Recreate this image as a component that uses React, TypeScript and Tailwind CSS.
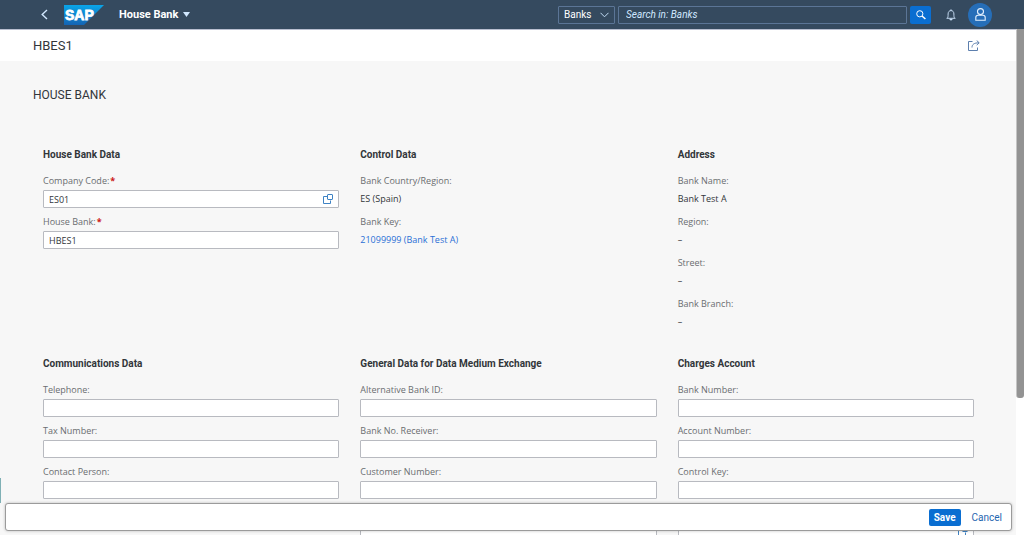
import React, { useState } from 'react';

interface Field {
  id: string;
  label: string;
  kind: 'input' | 'text' | 'link';
  value?: string;
  required?: boolean;
  valueHelp?: boolean;
}

interface FormGroup {
  title: string;
  fields: Field[];
}

const topGroups: FormGroup[] = [
  {
    title: 'House Bank Data',
    fields: [
      { id: 'companyCode', label: 'Company Code:', kind: 'input', value: 'ES01', required: true, valueHelp: true },
      { id: 'houseBank', label: 'House Bank:', kind: 'input', value: 'HBES1', required: true },
    ],
  },
  {
    title: 'Control Data',
    fields: [
      { id: 'country', label: 'Bank Country/Region:', kind: 'text', value: 'ES (Spain)' },
      { id: 'bankKey', label: 'Bank Key:', kind: 'link', value: '21099999 (Bank Test A)' },
    ],
  },
  {
    title: 'Address',
    fields: [
      { id: 'bankName', label: 'Bank Name:', kind: 'text', value: 'Bank Test A' },
      { id: 'region', label: 'Region:', kind: 'text', value: '–' },
      { id: 'street', label: 'Street:', kind: 'text', value: '–' },
      { id: 'branch', label: 'Bank Branch:', kind: 'text', value: '–' },
    ],
  },
];

const bottomGroups: FormGroup[] = [
  {
    title: 'Communications Data',
    fields: [
      { id: 'telephone', label: 'Telephone:', kind: 'input' },
      { id: 'taxNumber', label: 'Tax Number:', kind: 'input' },
      { id: 'contactPerson', label: 'Contact Person:', kind: 'input' },
    ],
  },
  {
    title: 'General Data for Data Medium Exchange',
    fields: [
      { id: 'altBankId', label: 'Alternative Bank ID:', kind: 'input' },
      { id: 'bankNoReceiver', label: 'Bank No. Receiver:', kind: 'input' },
      { id: 'customerNumber', label: 'Customer Number:', kind: 'input' },
      { id: 'dmeExtra', label: '', kind: 'input' },
    ],
  },
  {
    title: 'Charges Account',
    fields: [
      { id: 'bankNumber', label: 'Bank Number:', kind: 'input' },
      { id: 'accountNumber', label: 'Account Number:', kind: 'input' },
      { id: 'controlKey', label: 'Control Key:', kind: 'input' },
      { id: 'chargesExtra', label: '', kind: 'input', valueHelp: true },
    ],
  },
];

const SapLogo = () => (
  <svg width="40" height="20" viewBox="0 0 40 20" aria-label="SAP">
    <defs>
      <linearGradient id="sapBlue" x1="0" y1="0" x2="0" y2="1">
        <stop offset="0" stopColor="#0aa5e8" />
        <stop offset="1" stopColor="#1464b4" />
      </linearGradient>
    </defs>
    <path d="M0 0H40L20 20H0Z" fill="url(#sapBlue)" />
    <text
      x="1"
      y="15"
      fill="#fff"
      stroke="#fff"
      strokeWidth="0.8"
      fontFamily="Liberation Sans, Arial, sans-serif"
      fontWeight="700"
      fontSize="14"
    >
      SAP
    </text>
  </svg>
);

const ValueHelpIcon = () => (
  <svg width="10" height="10" viewBox="0 0 10 10" fill="none" stroke="#3f83c4">
    <path d="M4 2.5H0.5V9.5H7.5V6.5" />
    <rect x="4.5" y="0.5" width="5" height="5" rx="0.5" />
  </svg>
);

const FieldRow = ({ field }: { field: Field }) => {
  const [value, setValue] = useState(field.value ?? '');

  return (
    <div className="flex flex-col gap-[2px] font-['Open_Sans',sans-serif] text-[9px]">
      <label htmlFor={field.id} className="h-[14px] leading-[14px] text-[#6a6d70]">
        {field.label}
        {field.required && <span className="ml-px font-bold text-[#cc1919]">*</span>}
      </label>
      {field.kind === 'input' && (
        <div className="flex h-[18px] items-center rounded-[1px] border border-[#b8bac0] bg-white">
          <input
            id={field.id}
            value={value}
            onChange={(e) => setValue(e.target.value)}
            className="h-full min-w-0 flex-1 bg-transparent px-[5px] outline-none"
          />
          {field.valueHelp && (
            <button type="button" aria-label="Open value help" className="mr-[5px]">
              <ValueHelpIcon />
            </button>
          )}
        </div>
      )}
      {field.kind === 'text' && (
        <output id={field.id} className="block h-[18px] leading-[18px]">{field.value}</output>
      )}
      {field.kind === 'link' && (
        <a id={field.id} href="#bank" className="h-[18px] self-start leading-[18px] text-[#2a6fd6] hover:underline">
          {field.value}
        </a>
      )}
    </div>
  );
};

const GroupGrid = ({ groups }: { groups: FormGroup[] }) => (
  <div className="grid grid-cols-3 gap-[21px]">
    {groups.map((group) => (
      <section key={group.title}>
        <h3 className="mb-3 h-[14px] font-bold leading-[14px]">{group.title}</h3>
        <div className="flex flex-col gap-[7px]">
          {group.fields.map((field) => (
            <FieldRow key={field.id} field={field} />
          ))}
        </div>
      </section>
    ))}
  </div>
);

const ShellHeader = () => (
  <header className="flex h-[29px] shrink-0 items-center bg-[#354a5f] pl-[41px] pr-8 text-white">
    <button type="button" aria-label="Back" className="mr-4">
      <svg width="7" height="11" viewBox="0 0 7 11" fill="none" stroke="#d1e8ff" strokeWidth="1.4">
        <path d="M6 1L1.2 5.5L6 10" />
      </svg>
    </button>
    <a href="#home" className="mr-[15px]">
      <SapLogo />
    </a>
    <button type="button" className="flex items-center gap-[5px] text-[11px] font-bold leading-[14px]">
      House Bank
      <svg width="7" height="5" viewBox="0 0 7 5" fill="#d1e8ff">
        <path d="M0 0H7L3.5 5Z" />
      </svg>
    </button>

    <div className="ml-auto flex items-center">
      <div className="relative mr-[3px]">
        <select
          aria-label="Search scope"
          className="block h-[18px] w-[57px] appearance-none rounded-[1px] border border-[#5b7596] bg-transparent pl-[5px] outline-none"
        >
          <option>Banks</option>
        </select>
        <svg
          className="pointer-events-none absolute right-[6px] top-[6px]"
          width="9"
          height="6"
          viewBox="0 0 9 6"
          fill="none"
          stroke="#c3dcf5"
        >
          <path d="M0.5 0.8L4.5 4.8L8.5 0.8" />
        </svg>
      </div>
      <input
        type="text"
        aria-label="Search"
        placeholder="Search in: Banks"
        className="mr-[3px] h-[18px] w-[289px] rounded-[1px] border border-[#5b7596] bg-transparent px-[7px] outline-none placeholder:italic placeholder:text-[#d1e8ff]"
      />
      <button
        type="button"
        aria-label="Search"
        className="mr-[15px] flex h-[18px] w-[21px] items-center justify-center rounded-[2px] bg-[#0a6ed1]"
      >
        <svg width="10" height="10" viewBox="0 0 10 10" fill="none" stroke="#fff">
          <circle cx="3.8" cy="3.8" r="3.1" />
          <path d="M6 6L9.4 9" strokeWidth="1.6" />
        </svg>
      </button>
      <button type="button" aria-label="Notifications" className="mr-3">
        <svg width="10" height="12" viewBox="0 0 10 12" fill="none" stroke="#d1e8ff" strokeWidth="0.9">
          <path d="M0.6 9.3H9.4M1.2 9.2C2.1 8.3 2.1 7.2 2.1 5C2.1 2.9 3.2 1.6 5 1.6C6.8 1.6 7.9 2.9 7.9 5C7.9 7.2 7.9 8.3 8.8 9.2M5 0.3V1.6" />
          <path d="M3.8 10.3C4 11.3 6 11.3 6.2 10.3Z" fill="#d1e8ff" />
        </svg>
      </button>
      <button
        type="button"
        aria-label="User menu"
        className="flex size-6 items-center justify-center rounded-full bg-[#266eb8]"
      >
        <svg width="11" height="13" viewBox="0 0 11 13" fill="none" stroke="#e4f1ff" strokeWidth="1.1">
          <circle cx="5.5" cy="3.6" r="3" />
          <path d="M3 7.2H8C9.4 7.2 10.2 8 10.2 9.4V12.2H0.8V9.4C0.8 8 1.6 7.2 3 7.2Z" />
        </svg>
      </button>
    </div>
  </header>
);

export default function App() {
  return (
    <div className="flex h-screen flex-col overflow-hidden bg-[#f7f7f7] font-[Roboto,'Liberation_Sans',sans-serif] text-[10px] text-[#32363a]">
      <ShellHeader />

      <div className="relative flex min-h-0 flex-1">
        <main className="min-w-0 flex-1 overflow-hidden border-t border-[#b9bfd0]">
          <div className="flex h-[31px] items-center justify-between bg-white pl-[33px] pr-9">
            <h1 className="text-[13px]">HBES1</h1>
            <button type="button" aria-label="Share">
              <svg width="12" height="11" viewBox="0 0 12 11" fill="none" stroke="#5d7fae">
                <path d="M4.5 1.5H0.5V10.5H9.5V7.5" />
                <path d="M4 7.5C4 4.5 6 2.8 11 2.8M8.7 0.5L11.2 2.8L8.7 5.1" />
              </svg>
            </button>
          </div>

          <div className="pl-[43px] pr-[42px]">
            <h2 className="-ml-[10px] mb-11 mt-[25px] text-[12px] leading-[18px]">HOUSE BANK</h2>
            <div className="flex flex-col gap-[26px]">
              <GroupGrid groups={topGroups} />
              <GroupGrid groups={bottomGroups} />
            </div>
          </div>
        </main>

        {/* Scroll track */}
        <div className="w-2 shrink-0 bg-white">
          <div className="h-[73%] rounded-b-[3px] border-l border-[#c4c4c4] bg-[#939393]" />
        </div>

        {/* Collapsed side panel handle */}
        <div className="absolute bottom-8 left-0 h-[25px] w-px bg-[#7fb0b5]" />

        {/* Floating footer toolbar */}
        <footer className="absolute bottom-1 left-[5px] right-3 flex h-[28px] items-center justify-end gap-[11px] rounded-[3px] border border-[#9b9b9b] bg-white pr-[9px] shadow-[0_0_3px_rgba(0,0,0,0.25)]">
          <button
            type="button"
            className="h-[17px] rounded-[2px] bg-[#0a6ed1] px-[5px] font-bold text-white"
          >
            Save
          </button>
          <button type="button" className="text-[#1f66b0]">Cancel</button>
        </footer>
      </div>
    </div>
  );
}
